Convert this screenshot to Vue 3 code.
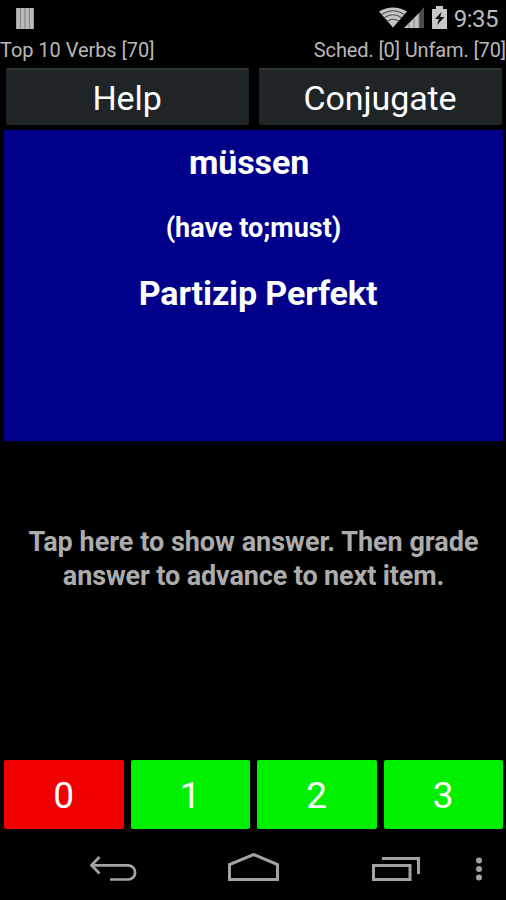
<template>
  <div class="screen">
    <!-- Status bar -->
    <div class="status-bar">
      <svg class="notification" width="18" height="21" viewBox="0 0 18 21">
        <rect width="18" height="21" fill="#8a8a8a" />
        <path d="M2.200 0v21M6.700 0v21M11.200 0v21M15.700 0v21" stroke="#bcbcbc" stroke-width="3.200" />
      </svg>
      <div class="status-right">
        <svg width="46" height="22" viewBox="0 0 46 22">
          <path d="M0 4.500Q14 -3.500 28 4.500L14 20.500Z" fill="#c4c4c4" />
          <path d="M2.500 7.500Q14 0 25.500 7.500M5 11Q14 4.500 23 11M8 14.500Q14 10 20 14.500" fill="none" stroke="#505050" stroke-width="1.100" />
          <path d="M25 21L40 6V21Z" fill="#c4c4c4" />
          <path d="M40 6L45 0V21H40Z" fill="#4c4c4c" />
          <path d="M30 16V21M35 11V21M40 6V21" stroke="#7c7c7c" stroke-width="1" />
        </svg>
        <svg class="battery" width="15" height="23" viewBox="0 0 15 23">
          <path d="M0 3H4V0H11V3H15V23H0Z" fill="#c8c8c8" />
          <path d="M9.500 6L3 13H7L5 19L12.500 11H8.200Z" fill="#111" />
        </svg>
        <span class="clock">9:35</span>
      </div>
    </div>

    <div class="info-row">
      <span class="deck">Top 10 Verbs [70]</span>
      <span class="counts">Sched. [0] Unfam. [70]</span>
    </div>

    <div class="actions">
      <button class="action">Help</button>
      <button class="action">Conjugate</button>
    </div>

    <!-- Question card -->
    <div class="card">
      <div class="verb">müssen</div>
      <div class="meaning">(have to;must)</div>
      <div class="form">Partizip Perfekt</div>
    </div>

    <div class="answer">
      <div class="line-one">Tap here to show answer. Then grade</div>
      <div class="line-two">answer to advance to next item.</div>
    </div>

    <div class="grades">
      <button
        v-for="grade in grades"
        :key="grade"
        class="grade"
        :class="{ failed: grade === 0 }"
      >{{ grade }}</button>
    </div>

    <!-- Navigation bar -->
    <div class="nav-bar">
      <svg width="506" height="71" viewBox="0 0 506 71" fill="none" stroke="#a3a3a3" stroke-width="3">
        <path d="M99.500 28L91.500 36.300L99.500 44.500M91.500 36.300H128A7 7 0 0 1 128 50.500H110" stroke-width="2.700" />
        <path d="M229.500 50.500V35.500L253.500 25.500L277.500 35.500V50.500Z" />
        <path d="M373.500 36.500H410V50.500H373.500Z" />
        <path d="M382 29.500H418.500V45" />
        <g fill="#a3a3a3" stroke="none">
          <circle cx="479" cy="31.500" r="3" />
          <circle cx="479" cy="40" r="3" />
          <circle cx="479" cy="48.500" r="3" />
        </g>
      </svg>
    </div>
  </div>
</template>

<script setup>
const grades = [0, 1, 2, 3]
</script>

<style>
body {
  margin: 0;
  background: #000;
}
</style>

<style scoped>
.screen {
  display: flex;
  flex-direction: column;
  width: 506px;
  height: 900px;
  background: #000;
  color: #fff;
  font-family: Roboto, sans-serif;
  overflow: hidden;
}

.status-bar {
  display: flex;
  justify-content: space-between;
  height: 38px;
  padding: 0 8px 0 16px;
  box-sizing: border-box;
}

.notification {
  margin-top: 8px;
}

.status-right {
  display: flex;
  padding-top: 7px;
}

.battery {
  margin: -1px 7px 0 7px;
}

.clock {
  font-size: 24px;
  line-height: 24px;
  letter-spacing: -0.5px;
  color: #bbb;
}

.info-row {
  display: flex;
  justify-content: space-between;
  height: 29px;
  font-size: 20px;
  line-height: 24px;
  color: #b8b8b8;
}

.deck {
  letter-spacing: -0.05px;
}

.counts {
  letter-spacing: -0.13px;
}

.actions {
  display: flex;
  gap: 10px;
  height: 63px;
  padding: 1px 4px 0 6px;
  box-sizing: border-box;
}

.action {
  flex: 1;
  height: 57px;
  padding: 1px 1px 0 0;
  border: none;
  border-top: 2px solid #2f3437;
  border-radius: 2px;
  background: #1f2427;
  color: #fff;
  font: 34px/54px Roboto, sans-serif;
  letter-spacing: -0.1px;
}

.card {
  height: 311px;
  margin: 0 3px 0 4px;
  padding-right: 9px;
  box-sizing: border-box;
  background: #00008b;
  font-weight: bold;
  text-align: center;
}

.verb {
  padding-top: 12px;
  font-size: 34px;
  line-height: 40px;
  letter-spacing: -0.1px;
}

.meaning {
  padding-top: 28px;
  padding-left: 9px;
  font-size: 27px;
  line-height: 36px;
}

.form {
  padding-top: 27px;
  padding-left: 18px;
  font-size: 34px;
  line-height: 40px;
  letter-spacing: -0.1px;
}

.answer {
  flex: 1;
  padding-top: 84px;
  color: #acacac;
  font-size: 27px;
  font-weight: bold;
  line-height: 34px;
  text-align: center;
}

.line-one {
  padding-left: 1px;
}

.line-two {
  padding-left: 1px;
  letter-spacing: -0.13px;
}

.grades {
  display: flex;
  gap: 7px;
  height: 69px;
  padding: 0 3px 0 4px;
}

.grade {
  flex: 1;
  padding: 1px 0 0;
  border: none;
  border-radius: 2px;
  background: #00f000;
  color: #fff;
  font: 37px Roboto, sans-serif;
}

.grade.failed {
  background: #f00000;
}

.nav-bar {
  height: 71px;
}
</style>
